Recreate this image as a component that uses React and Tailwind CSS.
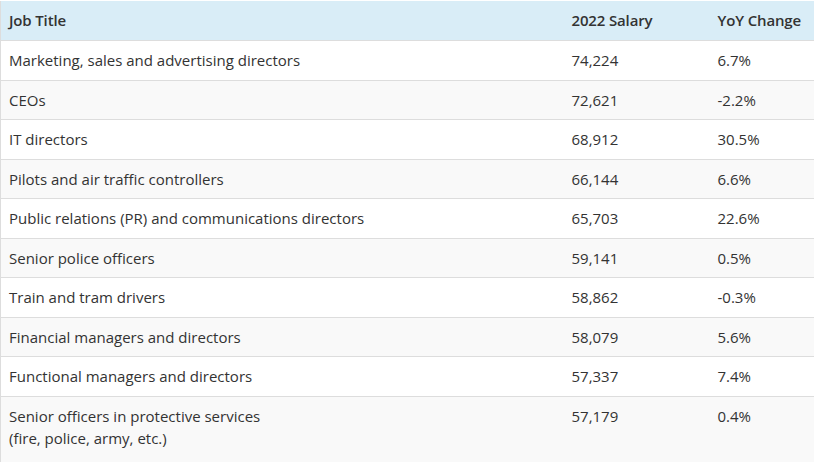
import React from 'react';

const rows = [
  ['Marketing, sales and advertising directors', '74,224', '6.7%'],
  ['CEOs', '72,621', '-2.2%'],
  ['IT directors', '68,912', '30.5%'],
  ['Pilots and air traffic controllers', '66,144', '6.6%'],
  ['Public relations (PR) and communications directors', '65,703', '22.6%'],
  ['Senior police officers', '59,141', '0.5%'],
  ['Train and tram drivers', '58,862', '-0.3%'],
  ['Financial managers and directors', '58,079', '5.6%'],
  ['Functional managers and directors', '57,337', '7.4%'],
  [['Senior officers in protective services', '(fire, police, army, etc.)'], '57,179', '0.4%'],
];

function App() {
  return (
    <div className="w-[814px] h-[462px] overflow-hidden bg-white pt-px font-['Open_Sans',sans-serif] text-[15px] leading-[22.5px] text-[#333]">
      <table className="w-[830px] border-collapse table-fixed">
        <colgroup>
          <col className="w-[563px]" />
          <col className="w-[146px]" />
          <col />
        </colgroup>
        <thead>
          <tr className="bg-[#d9edf7] border-b border-[#ddd] leading-[23px] tracking-[-0.15px]">
            <th className="text-left font-semibold px-2 py-2 border-l border-[#ddd]">Job Title</th>
            <th className="text-left font-semibold px-2 py-2">2022 Salary</th>
            <th className="text-left font-semibold px-2 py-2">YoY Change</th>
          </tr>
        </thead>
        <tbody>
          {rows.map(([title, salary, change], i) => (
            <tr key={i} className={`border-b border-[#ddd] align-top ${i % 2 === 1 ? 'bg-[#f9f9f9]' : 'bg-white'}`}>
              <td className={`px-2 border-l border-[#ddd] ${i === rows.length - 1 ? 'pt-2 pb-5' : 'py-2'}`}>
                {Array.isArray(title) ? (
                  <>
                    {title[0]}
                    <br />
                    {title[1]}
                  </>
                ) : title}
              </td>
              <td className="px-2 py-2">{salary}</td>
              <td className="px-2 py-2">{change}</td>
            </tr>
          ))}
        </tbody>
      </table>
    </div>
  );
}

export default App;
